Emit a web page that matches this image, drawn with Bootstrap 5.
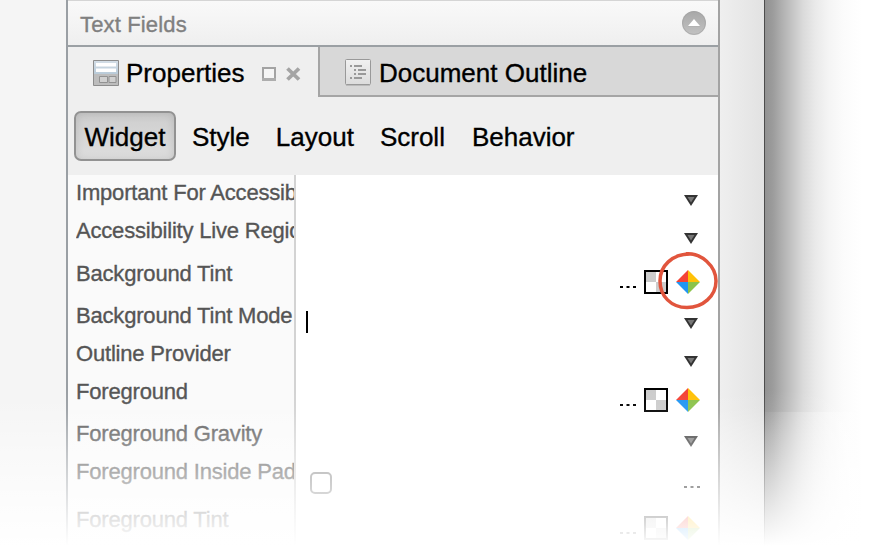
<!DOCTYPE html>
<html lang="en">
<head>
<meta charset="utf-8">
<title>Properties</title>
<link href="https://cdn.jsdelivr.net/npm/bootstrap@5.3.0/dist/css/bootstrap.min.css" rel="stylesheet">
<style>
body{width:876px;height:547px;font-family:"Liberation Sans",Arial,sans-serif;font-size:26px;line-height:1;color:#000;-webkit-text-stroke:.35px}
svg{display:block;flex:none}
.stage{width:876px;height:547px}
.gutter{width:66px;background:#f5f5f5}
.panel{width:654px;border-left:2px solid #9a9fa4;border-right:2px solid #a3a3a3;background:#fff}
.edge{width:45px;background:linear-gradient(90deg,#efefef,#e2e2e2);border-right:1px solid #4c4c4c}
.shade{background:linear-gradient(90deg,#919191 0,#9c9c9c 8px,#b2b2b2 18px,#c6c6c6 28px,#dadada 38px,#e9e9e9 50px,#f4f4f4 63px,#fbfbfb 78px,#fff 97px)}
.section-head{height:47px;border-top:1px solid #d5d5d5;border-bottom:2px solid #9ba0a4;background:linear-gradient(#f9f9f9,#efefef);color:#808080;font-size:22px;letter-spacing:.15px;padding:3px 12px 0}
.tabs{height:50px;background:#efefef}
.tab-on{width:250px;padding:2px 0 0 25px}
.tab-off{border-left:2px solid #a5a5a5;border-bottom:2px solid #a5a5a5;background:#d8d8d8;padding:3px 0 0 25px}
.tools{height:78px;background:#efefef;padding-left:6px}
.tools>span:not(.tool-btn){padding-top:1px}
.tool-btn{width:102px;height:50px;margin-top:-1px;border:2px solid #929292;border-radius:7px;background:linear-gradient(#cecece,#dedede);box-shadow:inset 0 1px 8px rgba(0,0,0,.13);padding-top:3px}
.names{width:228px;border-right:2px solid #d3d3d3;background:#fafafa;color:#555;font-size:22px;letter-spacing:-.19px;padding-left:8px}
.r38{height:38px}.r42{height:42px}.r43{height:43px}.r48{height:48px}.r45{height:45px}
.name-row{line-height:36px;white-space:nowrap;overflow:hidden;flex:none}
.val{flex:none;padding:20px 20px 0 10px}
.val-c{padding:14px 18px 0 0}
.fade-out{left:0;top:390px;width:876px;height:157px;background:linear-gradient(rgba(255,255,255,0) 0,rgba(255,255,255,.07) 20px,rgba(255,255,255,.27) 44px,rgba(255,255,255,.53) 82px,rgba(255,255,255,.82) 127px,#fff 156px)}
.fade-side{left:765px;top:412px;width:111px;height:135px;background:linear-gradient(90deg,rgba(255,255,255,.04),rgba(255,255,255,.3) 60px)}
.ring{left:657px;top:250px}
.caret{width:2px;height:22px;background:#000;margin-top:-9px}
.check-box{width:22px;height:22px;border:2px solid #858585;border-radius:5px;margin-top:-2px}
</style>
<script src="https://cdn.jsdelivr.net/npm/bootstrap@5.3.0/dist/js/bootstrap.bundle.min.js"></script>
</head>
<body class="overflow-hidden bg-white">
<svg width="0" height="0" class="position-absolute">
<defs>
<symbol id="arrow" viewBox="0 0 14 11"><path d="M0 0H14L7 11Z" fill="#333"/><path d="M3.5 2H10.5L7 7.5Z" fill="#777"/></symbol>
<symbol id="swatch" viewBox="0 0 24 24"><path fill="#fff" stroke="#000" stroke-width="2" d="M1 1h22v22H1z"/><path fill="#ccc" d="M2 2h10v10H2zM12 12h10v10H12z"/></symbol>
<symbol id="gem" viewBox="0 0 24 24"><path fill="#f44336" d="M12 0V12H0z"/><path fill="#ffc107" d="M12 0L24 12H12z"/><path fill="#2196f3" d="M0 12H12V24z"/><path fill="#8bc34a" d="M12 12H24L12 24z"/></symbol>
<symbol id="dots" viewBox="0 0 16 2"><path d="M0 0h3v2H0zM6.5 0h3v2h-3zM13 0h3v2h-3z"/></symbol>
<linearGradient id="gr" x2="0" y2="1"><stop stop-color="#a8a8a8"/><stop offset="1" stop-color="#c2c2c2"/></linearGradient>
<linearGradient id="gf" x2="0" y2="1"><stop stop-color="#f1f1f1"/><stop offset="1" stop-color="#dcdcdc"/></linearGradient>
<linearGradient id="gb" x2="0" y2="1"><stop stop-color="#d3dde6"/><stop offset="1" stop-color="#b9cbd9"/></linearGradient>
</defs>
</svg>
<main class="stage d-flex position-relative overflow-hidden">
  <div class="gutter flex-shrink-0"></div>
  <section class="panel d-flex flex-column flex-shrink-0">
    <header class="section-head d-flex align-items-center justify-content-between flex-shrink-0">
      <span>Text Fields</span>
      <svg width="24" height="24" style="margin-top:-3px"><circle cx="12" cy="12" r="12" fill="url(#gr)"/><circle cx="12" cy="12" r="11.4" fill="none" stroke="#a2a2a2" stroke-opacity=".6"/><path d="M6 15.5H18L12 8.5Z" fill="#999" opacity=".35"/><path d="M6 15H18L12 8Z" fill="#fff"/></svg>
    </header>
    <div class="tabs d-flex flex-shrink-0">
      <div class="tab-on d-flex align-items-center">
        <svg width="26" height="26"><path fill="#bdbdbd" stroke="#8d8d8d" d="M.5.5h25v25H.5z"/><path fill="url(#gb)" d="M1 1h24v13H1z"/><path fill="#fff" d="M3 3h20v3.5H3zM3 8.5h20V12H3z"/><path fill="#d0d0d0" stroke="#929292" d="M6.500 16.500h8v6h-8zM16 16.500h7v6h-7z"/></svg>
        <span style="margin-left:7px">Properties</span>
        <svg width="40" height="14" style="margin-left:17px;margin-top:2px"><path fill="#f5f5f5" stroke="#a3a3a3" stroke-width="2" d="M1 1h12v11H1z"/><path stroke="#adadad" stroke-width="3" d="M0 12.500h14"/><path stroke="#a4a4a4" stroke-width="3.800" d="M25.500 1.500L37 12.500M37 1.500L25.500 12.500"/></svg>
      </div>
      <div class="tab-off d-flex align-items-center flex-grow-1">
        <svg width="26" height="27"><path fill="#bbb" d="M1 25h24v2H1z"/><rect x=".5" y=".5" width="25" height="25" rx="1" fill="url(#gf)" stroke="#999"/><path fill="#999" d="M5 6h2v2H5zM9 6h8v2H9zM9 10h2v2H9zM13 10h8v2h-8zM9 14h2v2H9zM13 14h8v2h-8zM5 18h2v2H5zM9 18h8v2H9z"/></svg>
        <span style="margin-left:8px;padding-top:1px">Document Outline</span>
      </div>
    </div>
    <nav class="tools d-flex align-items-center flex-shrink-0">
      <span class="tool-btn d-flex align-items-center justify-content-center">Widget</span>
      <span style="margin-left:16px">Style</span>
      <span style="margin-left:26px">Layout</span>
      <span style="margin-left:26px">Scroll</span>
      <span style="margin-left:27px">Behavior</span>
    </nav>
    <div class="d-flex flex-grow-1 overflow-hidden">
      <div class="names d-flex flex-column flex-shrink-0">
        <div class="name-row r38">Important For Accessibility</div>
        <div class="name-row r43">Accessibility Live Region</div>
        <div class="name-row r42">Background Tint</div>
        <div class="name-row r38">Background Tint Mode</div>
        <div class="name-row r38">Outline Provider</div>
        <div class="name-row r42">Foreground</div>
        <div class="name-row r38">Foreground Gravity</div>
        <div class="name-row r48">Foreground Inside Padding</div>
        <div class="name-row r45">Foreground Tint</div>
      </div>
      <div class="flex-grow-1 d-flex flex-column">
        <div class="val r38 d-flex justify-content-end"><svg width="14" height="11"><use href="#arrow"/></svg></div>
        <div class="val r43 d-flex justify-content-end"><svg width="14" height="11"><use href="#arrow"/></svg></div>
        <div class="val val-c r42 d-flex justify-content-end"><svg width="16" height="2" style="margin:16px 8px 0 0"><use href="#dots"/></svg><svg width="24" height="24"><use href="#swatch"/></svg><svg class="ms-2" width="24" height="24"><use href="#gem"/></svg></div>
        <div class="val r38 d-flex justify-content-between align-items-start"><span class="caret" style="margin-top:-7px"></span><svg width="14" height="11"><use href="#arrow"/></svg></div>
        <div class="val r38 d-flex justify-content-end"><svg width="14" height="11"><use href="#arrow"/></svg></div>
        <div class="val val-c r42 d-flex justify-content-end"><svg width="16" height="2" style="margin:16px 8px 0 0"><use href="#dots"/></svg><svg width="24" height="24"><use href="#swatch"/></svg><svg class="ms-2" width="24" height="24"><use href="#gem"/></svg></div>
        <div class="val r38 d-flex justify-content-end"><svg width="14" height="11"><use href="#arrow"/></svg></div>
        <div class="val r48 d-flex justify-content-between" style="padding-right:18px;padding-left:14px"><span class="check-box"></span><svg width="16" height="2" style="margin-top:12px"><use href="#dots"/></svg></div>
        <div class="val val-c r45 d-flex justify-content-end"><svg width="16" height="2" style="margin:16px 8px 0 0"><use href="#dots"/></svg><svg width="24" height="24"><use href="#swatch"/></svg><svg class="ms-2" width="24" height="24"><use href="#gem"/></svg></div>
      </div>
    </div>
  </section>
  <div class="edge flex-shrink-0"></div>
  <div class="shade flex-grow-1"></div>
  <svg class="ring position-absolute" width="62" height="62"><path d="M29 3.800C44 2.500 59 16 59 31S46 57.500 30 57.500 3 46 3 31 15 4 33 4" fill="none" stroke="#e1553d" stroke-width="3.500"/></svg>
  <div class="fade-side position-absolute"></div>
  <div class="fade-out position-absolute"></div>
</main>
</body>
</html>
